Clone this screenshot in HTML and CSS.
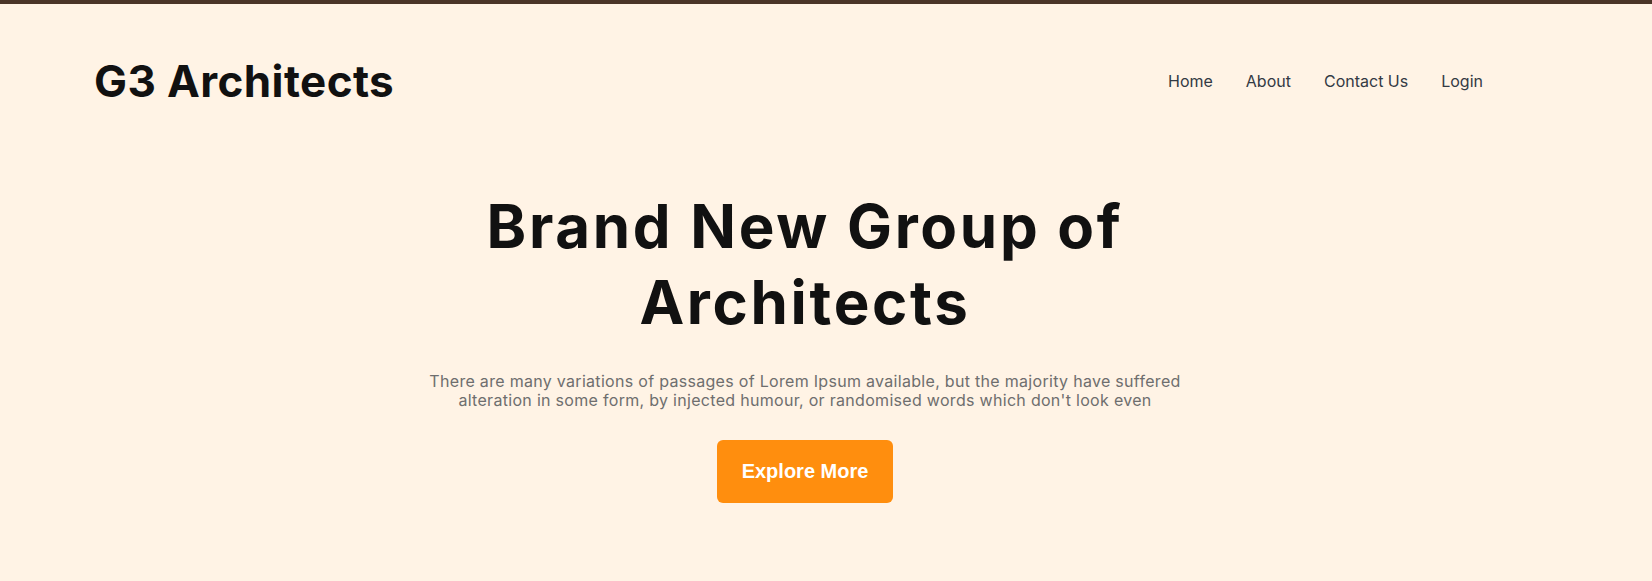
FILE: index.html
```html
<!DOCTYPE html>
<html lang="en">
<head>
<meta charset="utf-8">
<title>G3 Architects</title>
<link rel="stylesheet" href="styles.css">
</head>
<body>
<header class="site-header">
  <a class="logo" href="#">G3 Architects</a>
  <nav class="nav">
    <a href="#">Home</a>
    <a href="#">About</a>
    <a href="#">Contact Us</a>
    <a href="#">Login</a>
  </nav>
</header>
<main class="hero">
  <h1 class="hero-title">Brand New Group of Architects</h1>
  <p class="hero-text">There are many variations of passages of Lorem Ipsum available, but the majority have suffered alteration in some form, by injected humour, or randomised words which don't look even</p>
  <button class="btn" type="button">Explore More</button>
</main>
</body>
</html>
```
FILE: styles.css
```css
* { box-sizing: border-box; }
html, body { margin: 0; padding: 0; }
body {
  background: #fff3e5;
  border-top: 4px solid #4a3427;
  font-family: Inter, "Noto Sans", sans-serif;
  color: #111;
  min-height: 581px;
}
.site-header {
  display: flex;
  justify-content: space-between;
  align-items: center;
  padding: 50px 169px 0 94px;
}
.logo {
  font-size: 44px;
  font-weight: 700;
  letter-spacing: 0.4px;
  color: #111;
  text-decoration: none;
  line-height: normal;
}
.nav {
  display: flex;
  gap: 33px;
}
.nav a {
  font-size: 16px;
  color: #333a44;
  text-decoration: none;
}
.hero {
  display: flex;
  flex-direction: column;
  align-items: center;
  text-align: center;
  padding: 81px 42px 0 0;
}
.hero-title {
  margin: 0;
  font-size: 60px;
  line-height: 75.6px;
  font-weight: 700;
  letter-spacing: 2.7px;
  max-width: 720px;
}
.hero-text {
  margin: 32px 0 0;
  font-size: 16px;
  line-height: 18.7px;
  letter-spacing: 0.3px;
  color: #6e6e6e;
  max-width: 770px;
}
.btn {
  margin-top: 30px;
  font-family: "Liberation Sans", Arial, sans-serif;
  font-size: 20px;
  font-weight: 700;
  color: #fff;
  background: #ff8e0e;
  border: none;
  border-radius: 6px;
  padding: 20px 25px;
  line-height: 23px;
}
```
